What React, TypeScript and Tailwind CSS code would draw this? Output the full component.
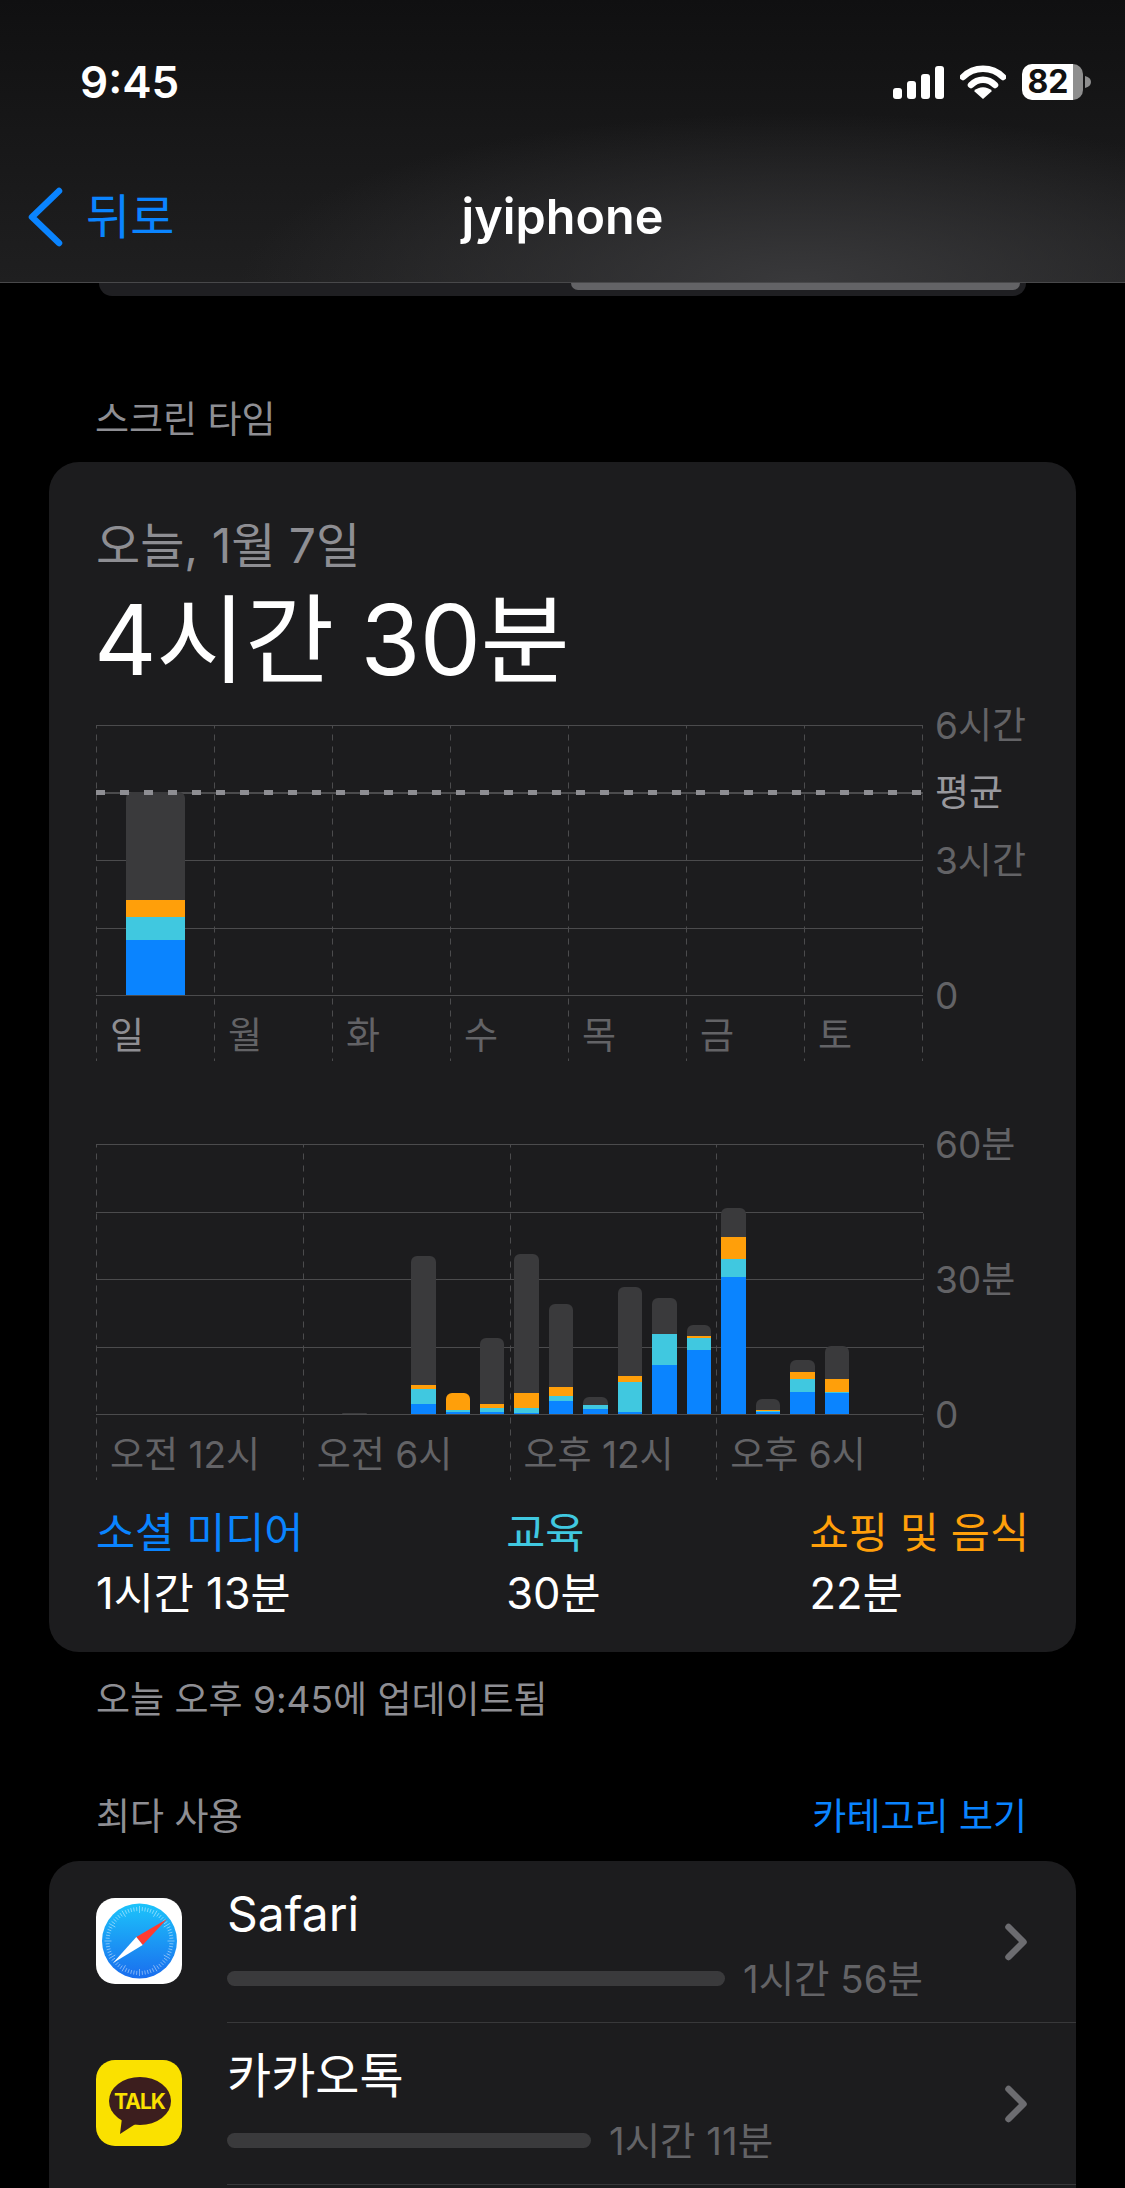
import React from "react";
import { ChevronRight } from "lucide-react";

type Seg = [number, number, number, number];

// heights in px, bottom to top: blue, cyan, orange, gray
const hours: (Seg | null)[] = [
  null, null, null, null, null, null, null,
  [0, 0, 0, 1],
  null,
  [10, 15, 4, 129],
  [2, 2, 17, 0],
  [2, 4, 4, 66],
  [1, 5, 15, 139],
  [13, 5, 9, 83],
  [5, 4, 0, 8],
  [2, 30, 6, 89],
  [49, 31, 0, 36],
  [64, 12, 2, 11],
  [137, 18, 22, 29],
  [2, 1, 1, 11],
  [22, 13, 7, 12],
  [21, 1, 13, 33],
  null, null,
];

const dash =
  "bg-[linear-gradient(#4b4b4d_50%,transparent_50%)] bg-[length:1px_12px] bg-repeat-y bg-left";

const Bar: React.FC<{ seg: Seg }> = ({ seg }) => (
  <div className="flex w-full flex-col overflow-hidden rounded-t-[6px]">
    <div className="bg-[#3a3a3c]" style={{ height: seg[3] }} />
    <div className="bg-[#ff9f0a]" style={{ height: seg[2] }} />
    <div className="bg-[#40c8e0]" style={{ height: seg[1] }} />
    <div className="bg-[#0a84ff]" style={{ height: seg[0] }} />
  </div>
);

const GridLines: React.FC = () => (
  <div className="grid h-full grid-rows-4 border-b border-[#4b4b4d]">
    <div className="border-t border-[#4b4b4d]" />
    <div className="border-t border-[#4b4b4d]" />
    <div className="border-t border-[#4b4b4d]" />
    <div className="border-t border-[#4b4b4d]" />
  </div>
);

const WeekChart: React.FC = () => {
  const days = ["일", "월", "화", "수", "목", "금", "토"];
  return (
    <div className="mt-[30px] flex">
      <div className="w-[827px]">
        <div className="relative h-[271px]">
          <GridLines />
          <div className="absolute inset-0 grid grid-cols-[repeat(7,118px)_1px]">
            {days.map((d) => (
              <div key={d} className={dash} />
            ))}
            <div className={dash} />
          </div>
          <div className="absolute left-0 right-0 top-[67px] h-px bg-[#4b4b4d]" />
          <div className="absolute bottom-px left-[30px] w-[59px]">
            <Bar seg={[55, 23, 17, 108]} />
          </div>
          <div className="absolute left-0 right-0 top-[65px] h-[5px] bg-[repeating-linear-gradient(90deg,#8e8e93_0px,#8e8e93_9px,transparent_9px,transparent_24px)]" />
        </div>
        <div className="grid h-[59px] grid-cols-[repeat(7,118px)_1px]">
          {days.map((d, i) => (
            <div
              key={d}
              className={`${dash} pl-[14px] pt-[15px] text-[37px] leading-[50px] ${
                i === 0 ? "text-[#8e8e93]" : "text-[#636366]"
              }`}
            >
              {d}
            </div>
          ))}
          <div className={dash} />
        </div>
      </div>
      <div className="-mt-[24px] ml-[12px] flex h-0 flex-col whitespace-nowrap text-[37px] leading-[50px] text-[#636366]">
        <span className="shrink-0">6시간</span>
        <span className="mt-[17px] shrink-0 text-[#98989d]">평균</span>
        <span className="mt-[18px] shrink-0">3시간</span>
        <span className="mt-[85px] shrink-0">0</span>
      </div>
    </div>
  );
};

const HourChart: React.FC = () => {
  const labels = ["오전 12시", "오전 6시", "오후 12시", "오후 6시"];
  return (
    <div className="mt-[89px] flex">
      <div className="w-[827px]">
        <div className="relative h-[271px]">
          <GridLines />
          <div className="absolute inset-0 grid grid-cols-[repeat(4,206.75px)_1px]">
            {labels.map((l) => (
              <div key={l} className={dash} />
            ))}
            <div className={dash} />
          </div>
          <div className="absolute inset-x-0 bottom-px flex items-end">
            {hours.map((seg, i) => (
              <div key={i} className="flex w-[34.46px] justify-center px-[5px]">
                {seg && <Bar seg={seg} />}
              </div>
            ))}
          </div>
        </div>
        <div className="grid h-[60px] grid-cols-[repeat(4,206.75px)_1px]">
          {labels.map((l) => (
            <div
              key={l}
              className={`${dash} pl-[14px] pt-[15px] text-[37px] leading-[50px] text-[#636366]`}
            >
              {l}
            </div>
          ))}
          <div className={dash} />
        </div>
      </div>
      <div className="-mt-[24px] ml-[12px] flex h-0 flex-col whitespace-nowrap text-[37px] leading-[50px] text-[#636366]">
        <span className="shrink-0">60분</span>
        <span className="mt-[85px] shrink-0">30분</span>
        <span className="mt-[85px] shrink-0">0</span>
      </div>
    </div>
  );
};

const SafariIcon: React.FC = () => {
  const ticks = Array.from({ length: 72 }, (_, i) => i * 5);
  return (
    <svg viewBox="0 0 86 86" className="h-[86px] w-[86px] shrink-0">
      <defs>
        <linearGradient id="safariBlue" x1="0" y1="0" x2="0" y2="1">
          <stop offset="0" stopColor="#1cc4fb" />
          <stop offset="1" stopColor="#1a6dee" />
        </linearGradient>
      </defs>
      <rect width="86" height="86" rx="19" fill="#fff" />
      <circle cx="43.5" cy="43" r="37.5" fill="url(#safariBlue)" />
      {ticks.map((a) => (
        <line
          key={a}
          x1="43.5"
          y1={a % 30 === 0 ? 8 : 9}
          x2="43.5"
          y2={a % 30 === 0 ? 15 : 13}
          stroke="#fff"
          strokeOpacity="0.7"
          strokeWidth="0.6"
          transform={`rotate(${a} 43.5 43)`}
        />
      ))}
      <polygon points="71,21 46.7,46.9 40.3,39.1" fill="#ff3b30" />
      <polygon points="17,65 46.7,46.9 40.3,39.1" fill="#fff" />
    </svg>
  );
};

const KakaoIcon: React.FC = () => (
  <svg viewBox="0 0 86 86" className="h-[86px] w-[86px] shrink-0">
    <rect width="86" height="86" rx="19" fill="#fae100" />
    <ellipse cx="44" cy="41" rx="31" ry="24" fill="#3c1e1e" />
    <polygon points="26,58 24,74 41,63" fill="#3c1e1e" />
    <text
      x="43.5"
      y="49"
      textAnchor="middle"
      fontFamily="Inter, sans-serif"
      fontWeight="700"
      fontSize="21"
      letterSpacing="-1"
      fill="#fae100"
    >
      TALK
    </text>
  </svg>
);

const AppRow: React.FC<{
  icon: React.ReactNode;
  name: string;
  barWidth: number;
  time: string;
  last?: boolean;
}> = ({ icon, name, barWidth, time, last }) => (
  <div className="flex h-[162px]">
    <div className="ml-[47px] mr-[45px] pt-[37px]">{icon}</div>
    <div className={`flex flex-1 ${last ? "" : "border-b border-[#38383a]"}`}>
      <div className="flex-1 pt-[23px]">
        <div className="text-[48px] leading-[60px] text-white">{name}</div>
        <div className="mt-[27px] flex h-[15px] items-center">
          <div className="h-[15px] rounded-[8px] bg-[#3a3a3c]" style={{ width: barWidth }} />
          <span className="ml-[18px] text-[38.5px] leading-[50px] text-[#636366]">{time}</span>
        </div>
      </div>
      <div className="flex items-center pr-[30px] text-[#6c6c70]">
        <ChevronRight size={60} strokeWidth={2.6} />
      </div>
    </div>
  </div>
);

const App: React.FC = () => {
  return (
    <div className="h-[2188px] w-[1125px] overflow-hidden bg-black font-['Inter','Noto_Sans_CJK_KR',sans-serif]">
      <div className="h-[283px] border-b border-[#48484a] bg-[radial-gradient(ellipse_560px_170px_at_800px_283px,#39393b_0%,transparent_100%),linear-gradient(#101011,#1f1f20)]">
        <div className="flex items-center justify-between pl-[80px] pr-[34px] pt-[52px]">
          <span className="text-[44px] font-semibold leading-[60px] text-white">9:45</span>
          <div className="flex items-center">
            <svg viewBox="0 0 51 33" className="h-[33px] w-[51px]">
              <rect x="0" y="22" width="9" height="11" rx="3" fill="#fff" />
              <rect x="14" y="15" width="9" height="18" rx="3" fill="#fff" />
              <rect x="28" y="8" width="9" height="25" rx="3" fill="#fff" />
              <rect x="42" y="0" width="9" height="33" rx="3" fill="#fff" />
            </svg>
            <svg viewBox="0 0 46 34" className="ml-[16px] h-[34px] w-[46px]">
              <path d="M3 12 C14 1 32 1 43 12" fill="none" stroke="#fff" strokeWidth="6.5" strokeLinecap="round" />
              <path d="M11 20 C18 13 28 13 35 20" fill="none" stroke="#fff" strokeWidth="6.5" strokeLinecap="round" />
              <path d="M23 34 L14 26 C19 21 27 21 32 26 Z" fill="#fff" />
            </svg>
            <div className="ml-[16px] flex h-[36px] w-[61px] items-center justify-center rounded-[10px] bg-[linear-gradient(90deg,#fff_84%,#8e8e8e_84%)] pr-[9px] text-[32px] font-bold leading-none text-[#111]">
              82
            </div>
            <svg viewBox="0 0 6 12" className="ml-[2px] h-[12px] w-[6px]">
              <path d="M0 0 C4 1 6 3 6 6 C6 9 4 11 0 12 Z" fill="#8e8e8e" />
            </svg>
          </div>
        </div>
        <div className="relative mt-[65px] flex h-[80px] items-center">
          <svg viewBox="0 0 38 60" className="ml-[26px] h-[60px] w-[38px]">
            <path d="M33 4 L6 30 L33 56" fill="none" stroke="#0a84ff" strokeWidth="6.5" strokeLinecap="round" strokeLinejoin="round" />
          </svg>
          <span className="ml-[22px] text-[48px] leading-[60px] text-[#0a84ff]">뒤로</span>
          <span className="absolute inset-x-0 text-center text-[48.5px] font-semibold leading-[60px] text-white">
            jyiphone
          </span>
        </div>
      </div>

      <div className="mx-[99px] flex h-[13px] justify-end overflow-hidden rounded-b-[24px] bg-[#1f1f22] pr-[6px]">
        <div className="h-[7px] w-[449px] rounded-b-[10px] bg-[#636366]" />
      </div>

      <div className="ml-[95px] mt-[99px] text-[37px] leading-[50px] text-[#8e8e93]">스크린 타임</div>

      <div className="mx-[49px] mt-[17px] h-[1190px] rounded-[30px] bg-[#1c1c1e] px-[47px] pt-[54px]">
        <div className="text-[48px] leading-[60px] text-[#8e8e93]">오늘, 1월 7일</div>
        <div className="-ml-[2px] mt-[9px] text-[97px] tracking-[-0.5px] leading-[110px] text-white">4시간 30분</div>
        <WeekChart />
        <HourChart />
        <div className="mt-[28px] flex">
          <div className="w-[411px]">
            <div className="text-[42.5px] leading-[60px] text-[#0a84ff]">소셜 미디어</div>
            <div className="text-[43.5px] leading-[60px] text-white">1시간 13분</div>
          </div>
          <div className="w-[304px]">
            <div className="text-[42.5px] leading-[60px] text-[#40c8e0]">교육</div>
            <div className="text-[43.5px] leading-[60px] text-white">30분</div>
          </div>
          <div>
            <div className="whitespace-nowrap text-[42.5px] leading-[60px] text-[#ff9f0a]">쇼핑 및 음식</div>
            <div className="text-[43.5px] leading-[60px] text-white">22분</div>
          </div>
        </div>
      </div>

      <div className="ml-[96px] mt-[23px] text-[37px] leading-[50px] text-[#8e8e93]">
        오늘 오후 9:45에 업데이트됨
      </div>

      <div className="mx-[96px] mt-[67px] flex justify-between pr-[2px] text-[37px] leading-[50px]">
        <span className="text-[#8e8e93]">최다 사용</span>
        <span className="text-[#0a84ff]">카테고리 보기</span>
      </div>

      <div className="mx-[49px] mt-[19px] overflow-hidden rounded-t-[30px] bg-[#1c1c1e] pb-[60px]">
        <AppRow icon={<SafariIcon />} name="Safari" barWidth={498} time="1시간 56분" />
        <AppRow icon={<KakaoIcon />} name="카카오톡" barWidth={364} time="1시간 11분" />
      </div>
    </div>
  );
};

export default App;
